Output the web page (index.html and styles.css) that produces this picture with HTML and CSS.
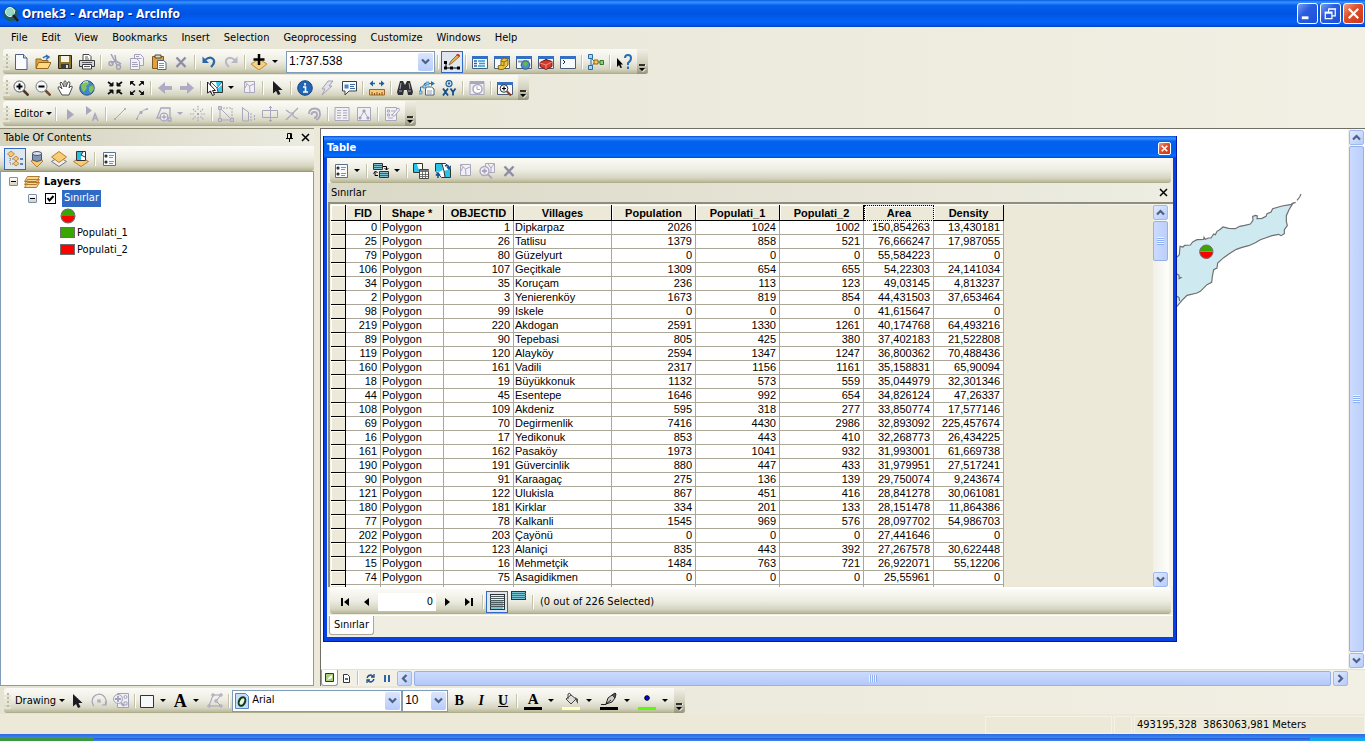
FILE: index.html
```html
<!DOCTYPE html>
<html lang="en">
<head>
<meta charset="utf-8">
<title>Ornek3 - ArcMap - ArcInfo</title>
<link rel="stylesheet" href="styles.css">
</head>
<body>
<svg class="defs" aria-hidden="true">
  <symbol id="chev-down" viewBox="0 0 9 9"><path d="M1 2.500l3.500 3.500 3.500-3.500" fill="none" stroke="#4d6185" stroke-width="2.200"/></symbol>
  <symbol id="chev-up" viewBox="0 0 9 9"><path d="M1 6.500l3.500-3.500 3.500 3.500" fill="none" stroke="#4d6185" stroke-width="2.200"/></symbol>
  <symbol id="chev-left" viewBox="0 0 9 9"><path d="M6.500 1l-3.500 3.500 3.500 3.500" fill="none" stroke="#4d6185" stroke-width="2.200"/></symbol>
  <symbol id="chev-right" viewBox="0 0 9 9"><path d="M2.500 1l3.500 3.500-3.500 3.500" fill="none" stroke="#4d6185" stroke-width="2.200"/></symbol>
  <symbol id="cross" viewBox="0 0 9 9"><path d="M1 1l7 7M8 1l-7 7" fill="none" stroke="currentColor" stroke-width="1.500"/></symbol>
  <symbol id="more" viewBox="0 0 7 8"><path d="M0 1h6" stroke="#000" stroke-width="1.500"/><path d="M0 4h6l-3 3z"/><path d="M6 1.500h1M6.500 5l-3 3" stroke="#fff"/></symbol>
  <symbol id="delete" viewBox="0 0 16 16"><path d="M3.500 3.500l9 9.500M12.500 3.500l-9 9.500" stroke="#8f8ca6" stroke-width="2.400" fill="none"/></symbol>
  <symbol id="clearsel" viewBox="0 0 16 16"><path d="M3.500 1.500h10v11h-10z" fill="#f1f0f5" stroke="#aaa7bd"/><path d="M4 2l4.500 4L13 4M8.500 6L9 12M6 4l-2 4" fill="none" stroke="#aaa7bd"/></symbol>
  <symbol id="options" viewBox="0 0 16 16"><path d="M2.500 1.500h12v13h-12z" fill="#f8fafc" stroke="#5b7089"/><circle cx="5" cy="5" r="1.500"/><circle cx="5" cy="11" r="1.500"/><circle cx="5" cy="5" r=".5" fill="#fff"/><circle cx="5" cy="11" r=".5" fill="#fff"/><path d="M8 4.500h5M8 6.500h4M8 10.500h5M8 12.500h4" stroke="#6f87a5" stroke-width=".9"/></symbol>
  <symbol id="pointer" viewBox="0 0 16 16"><path d="M4 1v12.500l3-2.500 2 4 2.500-1-2-4h4z" fill="#1c1c20"/></symbol>
  <symbol id="window" viewBox="0 0 16 16"><path d="M.500 2.500h15v12H.500z" fill="#f6f8fb" stroke="#4b5c75"/><path d="M0 2h16v3H0z" fill="#3470c4"/></symbol>
  <symbol id="pie" viewBox="0 0 16 16"><path d="M1 8a7 7 0 0 1 14 0z" fill="#38a800"/><path d="M1 8a7 7 0 0 0 14 0z" fill="#f00"/><circle cx="8" cy="8" r="7" fill="none" stroke="#6e6e6e" stroke-width="1.100"/></symbol>
</svg>

<header class="titlebar">
  <svg class="icon" viewBox="0 0 16 16"><circle cx="8" cy="8" r="7.500" fill="#1c5b68"/><path d="M4 2q6-2 9 3l-3 1-1 4-4-1-3-3z" fill="#5fc06b"/><circle cx="7" cy="6" r="4.500" fill="#a8e6ec" fill-opacity=".7" stroke="#e9f7f7"/><path d="M10 9l5 6" stroke="#2d1b12" stroke-width="2.500"/></svg>
  <h1>Ornek3 - ArcMap - ArcInfo</h1>
  <button class="winbtn" aria-label="Minimize"><svg viewBox="0 0 20 20"><path d="M4 13h7v3H4z" fill="#fff"/></svg></button>
  <button class="winbtn" aria-label="Restore"><svg viewBox="0 0 20 20" fill="none" stroke="#fff"><path d="M4.500 8.500h7v7h-7zM4 9.500h8M8 8V5.500h7v7h-3M8 5h8" stroke-width="1.300"/></svg></button>
  <button class="winbtn close" aria-label="Close"><svg viewBox="0 0 20 20"><path d="M5 5l10 10M15 5L5 15" stroke="#fff" stroke-width="2.300"/></svg></button>
</header>

<nav class="menubar">
  <button>File</button><button>Edit</button><button>View</button><button>Bookmarks</button><button>Insert</button><button>Selection</button><button>Geoprocessing</button><button>Customize</button><button>Windows</button><button>Help</button>
</nav>

<div class="docks">
  <div class="toolbar" role="toolbar" aria-label="Standard">
    <i class="grip"></i>
    <button class="tool" aria-label="New"><svg viewBox="0 0 16 16"><path d="M2.500.5h8l3.500 3.500v11.500H2.500z" fill="#f9fbfe" stroke="#46638c"/><path d="M10.500.5v3.500H14" fill="#c9d8ec" stroke="#46638c"/></svg></button>
    <button class="tool" aria-label="Open"><svg viewBox="0 0 16 16"><path d="M1 5h5l1 1.500h6V14H1z" fill="#dfa73e" stroke="#93661b"/><path d="M3.500 8.500H16L13 14.500H1z" fill="#ffd980" stroke="#93661b"/><path d="M8 4q2-2.500 5-1M11 1l3 2-3 2.500" fill="none" stroke="#2d6fb4" stroke-width="1.500"/></svg></button>
    <button class="tool" aria-label="Save"><svg viewBox="0 0 16 16"><path d="M1.500 1.500h13v13H1.500z" fill="#8e7629" stroke="#2d2612"/><path d="M4 2h8v6H4z" fill="#f6f3e6"/><path d="M4 10h8v5H4z" fill="#3a3a3a"/><path d="M9 11h2v3H9z" fill="#ddd"/></svg></button>
    <button class="tool" aria-label="Print"><svg viewBox="0 0 16 16"><path d="M4 .500h6l2 2V7H4z" fill="#fff" stroke="#444"/><path d="M.500 6.500h15v6H.500z" fill="#d5d7da" stroke="#3d3d40"/><path d="M3.500 10.500h9v4.500h-9z" fill="#fff" stroke="#3d3d40"/><path d="M5 12.500h6M3 8.500h10M6 3h3M6 5h4" stroke="#5d5d60"/></svg></button>
    <i class="sep"></i>
    <button class="tool" aria-label="Cut"><svg viewBox="0 0 16 16" fill="none" stroke="#a3a1b8" stroke-width="1.500"><path d="M4 0l6 11M8 1l1 6-5 2"/><circle cx="4" cy="9.500" r="2"/><ellipse cx="11.500" cy="13" rx="2" ry="2.300"/><path d="M9 7l5 3"/></svg></button>
    <button class="tool" aria-label="Copy"><svg viewBox="0 0 16 16" fill="#f2f1f6" stroke="#a3a1b8"><path d="M5.500.5h6l3 3v8h-9z"/><path d="M1.500 4.500h6l3 3v8h-9zM3 8.500h5M3 10.500h6M3 12.500h6M7.500 4.500h5M7 2.500h3"/></svg></button>
    <button class="tool" aria-label="Paste"><svg viewBox="0 0 16 16"><path d="M1.500 2.500h11v12h-11z" fill="#e0a23f" stroke="#825a1a"/><path d="M4 1h6v3H4z" fill="#ded9cc" stroke="#50493c"/><path d="M6.500 6.500h6l2.500 2v7H6.500z" fill="#fff" stroke="#4e6484"/><path d="M8 9.500h5M8 11.500h5M8 13.500h5" stroke="#7a93b5"/></svg></button>
    <button class="tool" aria-label="Delete"><svg><use href="#delete"/></svg></button>
    <i class="sep"></i>
    <button class="tool" aria-label="Undo"><svg viewBox="0 0 16 16"><path d="M4 6q5-4 8-1t-2 8" fill="none" stroke="#2c66a8" stroke-width="2.200"/><path d="M1.500 2.500V9H8z" fill="#2c66a8"/></svg></button>
    <button class="tool" aria-label="Redo"><svg viewBox="0 0 16 16"><path d="M12 6q-5-4-8-1t2 8" fill="none" stroke="#b9b7c6" stroke-width="2"/><path d="M14.500 2.500V9H8z" fill="#b9b7c6"/></svg></button>
    <i class="sep"></i>
    <button class="tool wide" aria-label="Add Data"><svg viewBox="0 0 16 16"><path d="M8 5l8 5-8 6-8-6z" fill="#f7d182" stroke="#c08a34"/><path d="M8 0v11M2.500 5.500h11" stroke="#000" stroke-width="2.500"/></svg><i class="drop"></i></button>
    <label class="combo scale"><select aria-label="Map scale"><option>1:737.538</option></select><span class="combobtn"><svg><use href="#chev-down"/></svg></span></label>
    <i class="sep"></i>
    <button class="tool on" aria-label="Editor Toolbar"><svg viewBox="0 0 16 16"><path d="M2 8.500V14h12" fill="none" stroke="#000"/><path d="M0 7h3v3H0zM0 12.500h3v3H0zM6 12.500h3v3H6zM13 12.500h3v3h-3z"/><path d="M5 11l2-4L14 0l2 2-8 7z" fill="#e8b44a" stroke="#7d5521" stroke-width=".8"/><path d="M13 0l2 2" stroke="#c3333a" stroke-width="2"/></svg></button>
    <i class="sep"></i>
    <button class="tool" aria-label="Table Of Contents"><svg viewBox="0 0 16 16"><use href="#window"/><path d="M2 7h3M2 9.500h3M2 12h3" stroke="#2d64b0" stroke-width="1.500"/><path d="M6 7h7M7 9.500h6M6 12h7" stroke="#2f9bd8" stroke-width="1.300"/></svg></button>
    <button class="tool" aria-label="Catalog"><svg viewBox="0 0 16 16"><use href="#window"/><path d="M4 12l3-1V6l3-2 4 1v6l-4 4-5 1z" fill="#ecc53f" stroke="#7d6414"/><path d="M7 7l3 1 4-2M10 8v4M7 11l3 1" stroke="#8a6d12" fill="none"/></svg></button>
    <button class="tool" aria-label="Search"><svg viewBox="0 0 16 16"><use href="#window"/><path d="M2 7.500h11" stroke="#8b9ab0" stroke-width="2"/><circle cx="9.500" cy="11" r="4.300" fill="#4d8cc9" stroke="#2c5a85"/><path d="M7 9q3-3 5 0l-2 4-2-2z" fill="#62b854"/></svg></button>
    <button class="tool" aria-label="ArcToolbox"><svg viewBox="0 0 16 16"><use href="#window"/><path d="M2 8.500l6-3 6 2v5l-6 3-6-3z" fill="#d63a2c" stroke="#7d1b14"/><path d="M2 9l6 2 6-3M8 11v4" stroke="#f08a7d" fill="none"/><path d="M6 7q2-3 4 0" stroke="#7d1b14" fill="none"/></svg></button>
    <button class="tool" aria-label="Python"><svg viewBox="0 0 16 16"><use href="#window"/><path d="M3 6l2 2-2 2" fill="none" stroke="#222"/></svg></button>
    <i class="sep"></i>
    <button class="tool" aria-label="ModelBuilder"><svg viewBox="0 0 16 16"><path d="M3 4v9M3 4l4 4-4 5M7 8h8" fill="none" stroke="#2b6aa5"/><path d="M.500.500h4v4h-4zM.500 11.500h4v4h-4z" fill="#a6d7f4" stroke="#2b6aa5"/><path d="M6 6h4v4H6z" fill="#f4cf54" stroke="#8a691a"/><path d="M12 6.500h3.500v4H12z" fill="#8bd27c" stroke="#35762d"/></svg></button>
    <i class="sep"></i>
    <button class="tool" aria-label="What's This?"><svg viewBox="0 0 16 16"><path d="M1 4v9l2-2 1.500 3 1.500-.5-1.500-3H7z"/><path d="M9 4q0-3 3-3t3 3-3 5v2M12 12.500V15" stroke="#2a6db5" stroke-width="2" fill="none"/></svg></button>
    <button class="more" aria-label="Toolbar options"><svg><use href="#more"/></svg></button>
  </div>

  <div class="toolbar" role="toolbar" aria-label="Tools">
    <i class="grip"></i>
    <button class="tool" aria-label="Zoom In"><svg viewBox="0 0 16 16"><circle cx="6.500" cy="6.500" r="5.500" fill="#f5f8fb" stroke="#555"/><path d="M3.500 6.500h6M6.500 3.500v6" stroke="#000" stroke-width="2"/><path d="M10.500 10.500l5 5" stroke="#4a3524" stroke-width="2.500"/></svg></button>
    <button class="tool" aria-label="Zoom Out"><svg viewBox="0 0 16 16"><circle cx="6.500" cy="6.500" r="5.500" fill="#f5f8fb" stroke="#777"/><path d="M3.500 6.500h6" stroke="#000" stroke-width="2"/><path d="M10.500 10.500l5 5" stroke="#6b4a31" stroke-width="2.500"/></svg></button>
    <button class="tool" aria-label="Pan"><svg viewBox="0 0 16 16"><path d="M5 15L1 8q0-2 2-1l2 2-2-6q1-2 2 0l2 4V1.500q1-1.500 2 0V7l2-5q1.500-1 2 1l-1 5 2-2q2 0 1 2l-3 7z" fill="#fff" stroke="#4c4c4c"/></svg></button>
    <button class="tool" aria-label="Full Extent"><svg viewBox="0 0 16 16"><circle cx="8" cy="8" r="7.200" fill="#3f87cf" stroke="#234f80"/><path d="M2 5q3-4 7-4l1 3-3 2 1 2-3 4q-3-2-3-7zM10 7l4-2 1 4-3 4-2-2z" fill="#83c257"/><path d="M4 3q2-2 5-1" stroke="#e3f4cf" fill="none"/></svg></button>
    <i class="sep blank"></i>
    <button class="tool" aria-label="Fixed Zoom In"><svg viewBox="0 0 16 16" fill="#111" stroke="#111"><path d="M1 2l4 3M15 2l-4 3M1 14l4-3M15 14l-4-3" stroke-width="1.800"/><path d="M6 2.500V6H2.500zM10 2.500V6h3.500zM6 13.500V10H2.500zM10 13.500V10h3.500z"/></svg></button>
    <button class="tool" aria-label="Fixed Zoom Out"><svg viewBox="0 0 16 16" fill="#111" stroke="#111"><path d="M2 2l4 3.500M14 2l-4 3.500M2 14l4-3.500M14 14l-4-3.500" stroke-width="1.600"/><path d="M1.500 1.500h3l-3 3zM14.500 1.500h-3l3 3zM1.500 14.500h3l-3-3zM14.500 14.500h-3l3-3z"/></svg></button>
    <i class="sep"></i>
    <button class="tool" aria-label="Back"><svg viewBox="0 0 16 16"><path d="M1 8l7-6v4h7v4H8v4z" fill="#aeabc2"/></svg></button>
    <button class="tool" aria-label="Forward"><svg viewBox="0 0 16 16"><path d="M15 8L8 2v4H1v4h7v4z" fill="#aeabc2"/></svg></button>
    <i class="sep"></i>
    <button class="tool wide" aria-label="Select Features"><svg viewBox="0 0 16 16"><path d="M3.500 1.500h12v11h-12z" fill="#fff" stroke="#333"/><path d="M9 2h6l-5 5zM10 9l5-4v7h-4z" fill="#35c9ec"/><path d="M4 2l6 6 5-6M10 8l1 4" fill="none" stroke="#333" stroke-width=".8"/><path d="M.5 2v11l3-2 2 4.500 2-1-2-4h3z" fill="#fff" stroke="#222"/></svg><i class="drop"></i></button>
    <button class="tool" aria-label="Clear Selected Features"><svg><use href="#clearsel"/></svg></button>
    <i class="sep"></i>
    <button class="tool" aria-label="Select Elements"><svg><use href="#pointer"/></svg></button>
    <i class="sep"></i>
    <button class="tool" aria-label="Identify"><svg viewBox="0 0 16 16"><circle cx="8" cy="8" r="7.300" fill="#2366b8" stroke="#174480"/><path d="M8 3v2.500M6 7h2.500v5M6 12h5" stroke="#fff" stroke-width="1.600" fill="none"/></svg></button>
    <button class="tool" aria-label="Hyperlink"><svg viewBox="0 0 16 16"><path d="M9 1h5l-4 5h3L3 15l3-6H3z" fill="#e3e2ea" stroke="#a3a1b8"/></svg></button>
    <button class="tool" aria-label="HTML Popup"><svg viewBox="0 0 16 16"><path d="M1.500 1.500h14v9.500H8l-4 4v-4H1.500z" fill="#f8fafc" stroke="#3e4247"/><path d="M3.500 4.500h4v4h-4z" fill="#4c86c4"/><path d="M9 4.500h5M9 6.500h4M9 8.500h5" stroke="#3a6da8"/></svg></button>
    <i class="sep"></i>
    <button class="tool" aria-label="Measure"><svg viewBox="0 0 16 16"><path d="M2 3.500h4M10 3.500h4" stroke="#256ba8" stroke-width="1.500"/><path d="M4 .500v6L.500 3.500zM12 .500v6l3.500-3z" fill="#1f5d9c"/><path d="M.500 9.500h15v5.500H.500z" fill="#f4ca7c" stroke="#a46428"/><path d="M3 15v-3M5.500 15v-2M8 15v-3M10.500 15v-2M13 15v-3" stroke="#8a4f1b"/></svg></button>
    <i class="sep"></i>
    <button class="tool" aria-label="Find"><svg viewBox="0 0 16 16"><path d="M3 1h3l2 4 2-4h3l3 11-1 3h-4l-1-5H7l-1 5H1l-1-3z" fill="#2f3034"/><path d="M2 11h3M11 11h3M4 3l-1 6M12 3l1 6" stroke="#a3a7ae"/></svg></button>
    <button class="tool" aria-label="Find Route"><svg viewBox="0 0 16 16"><path d="M1.500 12V7h4V3.500h7" fill="none" stroke="#2874a8"/><path d="M12 1l4 2.500L12 6z" fill="#2874a8"/><path d="M0 11h3v3H0zM4 5h3v3H4zM7 2h3v3H7z" fill="#9fd0ee" stroke="#2874a8" stroke-width=".6"/><path d="M6.500 8.500l2-1.500h4l2.500 2v6H6.500z" fill="#fff" stroke="#4b6378"/><path d="M8 11h5M8 13h5" stroke="#8ba0b1"/></svg></button>
    <button class="tool" aria-label="Go To XY"><svg viewBox="0 0 16 16"><circle cx="8" cy="3.500" r="3" fill="#dff1fb" stroke="#2b6795" stroke-width="1.300"/><circle cx="8" cy="3.500" r="1.200" fill="#2b6795"/><path d="M2 8.500l5 7M7 8.500l-5 7M9.500 8.500l2.500 3.500 2.500-3.500M12 12v3.500" stroke="#174f87" stroke-width="1.800" fill="none"/></svg></button>
    <i class="sep"></i>
    <button class="tool" aria-label="Time Slider"><svg viewBox="0 0 16 16"><path d="M1 1.500h14v13H1z" fill="#eeedf3" stroke="#aaa7bd"/><path d="M1 2h14v2H1z" fill="#aaa7bd"/><circle cx="8.500" cy="9" r="4.500" fill="#fff" stroke="#aaa7bd" stroke-width="1.500"/><path d="M8 6v3.500h3" stroke="#aaa7bd" fill="none"/></svg></button>
    <i class="sep"></i>
    <button class="tool" aria-label="Create Viewer Window"><svg viewBox="0 0 16 16"><use href="#window"/><circle cx="7" cy="8.500" r="3.800" fill="#fff" stroke="#333"/><path d="M5 8.500h4M7 6.500v4" stroke="#000" stroke-width="1.200"/><path d="M10 11.500l4 4" stroke="#8a3b24" stroke-width="2"/></svg></button>
    <button class="more" aria-label="Toolbar options"><svg><use href="#more"/></svg></button>
  </div>

  <div class="toolbar" role="toolbar" aria-label="Editor">
    <i class="grip"></i>
    <button class="textbtn">Editor<i class="drop"></i></button>
    <i class="sep"></i>
    <button class="tool" aria-label="Edit Tool"><svg viewBox="0 0 16 16"><path d="M5 3v11l7-5.500z" fill="#aaa7bd"/></svg></button>
    <button class="tool" aria-label="Edit Annotation"><svg viewBox="0 0 16 16"><path d="M2 0v9l6-4.500z" fill="#aaa7bd"/><path d="M8.500 15L11 8l3 7M9.500 12.500h4" stroke="#aaa7bd" stroke-width="1.600" fill="none"/></svg></button>
    <i class="sep"></i>
    <button class="tool" aria-label="Straight Segment"><svg viewBox="0 0 16 16" fill="#aaa7bd" stroke="#aaa7bd"><path d="M3 13L13 3M2.500 12.500h1v1h-1zM12.500 2.500h1v1h-1z"/></svg></button>
    <button class="tool" aria-label="End Point Arc"><svg viewBox="0 0 16 16" fill="#aaa7bd" stroke="#aaa7bd"><path d="M3 13Q5 5 13 3" fill="none"/><path d="M2.500 12.500h1v1h-1zM12.500 2.500h1v1h-1zM6 5.500h2v2H6z"/></svg></button>
    <button class="tool wide" aria-label="Trace"><svg viewBox="0 0 16 16" fill="none" stroke="#aaa7bd" stroke-width="1.300"><path d="M4 12H1L5 2h9v9"/><circle cx="8" cy="11" r="3.800" fill="#f1f0f5"/><path d="M8 8.500v5M5.500 11h5M12 12h3v3h-3z"/></svg><i class="drop off"></i></button>
    <button class="tool" aria-label="Point"><svg viewBox="0 0 16 16" stroke="#aaa7bd" stroke-width="1.200" stroke-dasharray="1.500 1"><path d="M8 0v5M8 11v5M0 8h5M11 8h5M3 3l3 3M10.500 10.500l3 3M13 3l-3 3M5.500 10.500l-3 3"/><path d="M7 7h2v2H7z" fill="#aaa7bd" stroke="none"/></svg></button>
    <i class="sep"></i>
    <button class="tool" aria-label="Edit Vertices"><svg viewBox="0 0 16 16" fill="none" stroke="#aaa7bd"><path d="M2 2h12v12" stroke-dasharray="2 1"/><path d="M2 3v11h12L2 2"/><path d="M.500.500h3v3h-3zM12.500 12.500h3v3h-3zM.500 12.500h3v3h-3z" fill="#cfcddb"/></svg></button>
    <button class="tool" aria-label="Reshape Feature"><svg viewBox="0 0 16 16" fill="none" stroke="#aaa7bd"><path d="M2.500 1v14M2.500 2l6 4v9H3"/><path d="M11 7v8M14.500 9v6" stroke-dasharray="2 1"/></svg></button>
    <button class="tool" aria-label="Cut Polygons"><svg viewBox="0 0 16 16" fill="none" stroke="#aaa7bd"><path d="M.500 4.500h15v7H.500z"/><path d="M8.500 0v16M7 1.500h3M7 14.500h3"/></svg></button>
    <button class="tool" aria-label="Split Tool"><svg viewBox="0 0 16 16" fill="none" stroke="#aaa7bd" stroke-width="1.200"><path d="M2 14L14 2M2 4l4 3M9 10l5 3"/><path d="M6 7h3v3"/></svg></button>
    <button class="tool" aria-label="Rotate Tool"><svg viewBox="0 0 16 16" fill="none" stroke="#aaa7bd" stroke-width="1.800"><path d="M3 8q0-5.500 5.500-5.500T14 8q0 4.500-4 6"/><path d="M5.500 9q0-3 3-3t2.500 3-3 3"/></svg></button>
    <i class="sep"></i>
    <button class="tool" aria-label="Attributes"><svg viewBox="0 0 16 16" fill="#f1f0f5" stroke="#aaa7bd"><path d="M1 1.500h14v13H1zM3 4.500h4M9 4.500h4M3 7h4M9 7h4M3 9.500h4M9 9.500h4M3 12h4M9 12h4"/></svg></button>
    <button class="tool" aria-label="Sketch Properties"><svg viewBox="0 0 16 16" fill="#f1f0f5" stroke="#aaa7bd"><path d="M1.500 1.500h13v13h-13zM4 12l4-7 4 7"/><path d="M3 11h2v2H3zM11 11h2v2h-2zM7 4h2v2H7z" fill="#8f8ca6"/></svg></button>
    <i class="sep"></i>
    <button class="tool" aria-label="Create Features"><svg viewBox="0 0 16 16" fill="#f1f0f5" stroke="#aaa7bd"><path d="M1.500 1.500h11v13h-11zM3.500 4h2v2h-2zM3.500 8h2v2h-2zM7 5h4M7 9h4M4 12h5"/><path d="M8 9l6-7 2 1.500-6 7z"/></svg></button>
    <button class="more" aria-label="Toolbar options"><svg><use href="#more"/></svg></button>
  </div>
</div>

<main class="workspace">
  <aside class="toc">
    <div class="panelhead"><h2>Table Of Contents</h2>
      <button aria-label="Auto Hide"><svg viewBox="0 0 9 9" fill="none" stroke="#000"><path d="M2.500 5V.500h4V5M5.500 0v5M1 5.500h7M4.500 6v3"/></svg></button>
      <button aria-label="Close"><svg><use href="#cross"/></svg></button></div>
    <div class="bar tocbar" role="toolbar" aria-label="List layers">
      <button class="tool on" aria-label="List By Drawing Order"><svg viewBox="0 0 16 16"><path d="M3 5v8h4M3 8h4" fill="none" stroke="#777" stroke-dasharray="1 1"/><path d="M4 0l3.500 3L4 6 .500 3zM9 5l3 2.500L9 10 6 7.500zM9 10l3 2.500L9 15l-3-2.500z" fill="#f3c87d" stroke="#c18a3e"/><path d="M13 8h3M13 13h3" stroke="#2d64b0" stroke-width="1.500"/></svg></button>
      <button class="tool" aria-label="List By Source"><svg viewBox="0 0 16 16"><path d="M2 10l6-3 6 3-6 6z" fill="#f7ca70" stroke="#b77e31"/><path d="M3.500 2v7q4.500 3 9 0V2z" fill="#8196b4" stroke="#47566b"/><ellipse cx="8" cy="2.500" rx="4.500" ry="2" fill="#d9e2ee" stroke="#47566b"/></svg></button>
      <button class="tool" aria-label="List By Visibility"><svg viewBox="0 0 16 16"><path d="M8 6l7.500 4.500L8 15.500.500 10.500z" fill="#eee" stroke="#777"/><path d="M8 .500L15.500 6 8 11.500.500 6z" fill="#f8cb74" stroke="#b77e31"/></svg></button>
      <button class="tool" aria-label="List By Selection"><svg viewBox="0 0 16 16"><path d="M8 6l7.500 4.500L8 15.500.500 10.500z" fill="#f8cb74" stroke="#b77e31"/><path d="M3.500.500h9v9h-9z" fill="#fff" stroke="#333"/><path d="M4 1h6L8 4v5H4z" fill="#28bfe5"/><path d="M10 1L8 4l4 2" stroke="#333" fill="none"/></svg></button>
      <i class="sep"></i>
      <button class="tool" aria-label="Options"><svg><use href="#options"/></svg></button>
    </div>
    <div class="tree">
      <div class="node"><button class="twist" aria-label="Collapse"></button><svg class="icon" viewBox="0 0 16 16" fill="#f8d694" stroke="#b07a30"><path d="M3.500 8.500h12l-3 5H.500zM3.500 5.500h12l-3 5H.500zM3.500 2.500h12l-3 5H.500z"/></svg><strong>Layers</strong></div>
      <div class="node lvl1"><button class="twist" aria-label="Collapse"></button><input type="checkbox" id="lyr" checked><label for="lyr" class="picked">Sınırlar</label></div>
      <div class="node lvl2"><svg class="icon"><use href="#pie"/></svg></div>
      <div class="node lvl2"><i class="swatch green"></i><span>Populati_1</span></div>
      <div class="node lvl2"><i class="swatch red"></i><span>Populati_2</span></div>
    </div>
  </aside>

  <section class="mapview">
    <div class="canvas">
      <svg class="island" viewBox="530 190 381 345" aria-label="Map">
        <path d="M530 382L537 375 539 350 548 352 553 347 570 346 577 337 590 330 610 329 611 323 615 329 624 325 632 325 640 313 645 315 650 305 658 300 668 292 685 296 705 297 718 290 733 287 750 283 758 272 757 260 765 257 771 259 770 267 785 266 797 260 800 252 812 247 817 237 845 229 870 225 877 222 866 240 858 258 858 275 861 288 852 300 852 312 842 318 835 314 815 318 795 325 780 330 765 339 745 348 725 353 708 359 690 370 670 384 652 400 650 415 640 420 636 440 634 458 620 465 600 485 590 490 560 497 545 512 540 518 530 530" fill="#cfe9f0" stroke="#6e6e6e" stroke-width="3.500"/>
        <path d="M874 222l12-4M890 212l8-10 4-9M530 433l6 3 0 6 6 2-8 4M530 500l6 4 2 10" fill="none" stroke="#6e6e6e" stroke-width="3.500"/>
        <path d="M598 366a20 20 0 0 1 40 0z" fill="#38a800"/><path d="M598 367a20 20 0 0 0 40 0z" fill="#f00"/><circle cx="618" cy="366" r="20" fill="none" stroke="#6e6e6e" stroke-width="3"/>
      </svg>

      <section class="window" aria-label="Table">
        <div class="wtitle"><h2>Table</h2><button class="winbtn close" aria-label="Close"><svg viewBox="0 0 20 20"><path d="M5 5l10 10M15 5L5 15" stroke="#fff" stroke-width="3"/></svg></button></div>
        <div class="wbody">
          <div class="bar" role="toolbar" aria-label="Table tools">
            <button class="tool wide" aria-label="Table Options"><svg><use href="#options"/></svg><i class="drop"></i></button>
            <i class="sep"></i>
            <button class="tool wide" aria-label="Related Tables"><svg viewBox="0 0 16 16"><path d="M.500.500h9v6h-9zM6.500 8.500h9v6h-9z" fill="#7fbfd0" stroke="#333"/><path d="M1 2.500h8M1 4.500h8M7 10.500h8M7 12.500h8" stroke="#333" stroke-width=".7"/><path d="M10 3.500h3.500V7M11.500 5l2 2 2-2M5 12.500H2V9M.500 10.500L2.500 8l2 2" fill="none" stroke="#000"/></svg><i class="drop"></i></button>
            <i class="sep"></i>
            <button class="tool" aria-label="Select By Attributes"><svg viewBox="0 0 16 16"><path d="M.500.500h9v9h-9z" fill="#fff" stroke="#333"/><path d="M1 1h3l1 4 4 4H1z" fill="#28c4e8"/><path d="M6.500 6.500h9v9h-9z" fill="#fff" stroke="#444"/><path d="M7 7h9v2H7z" fill="#777"/><path d="M7 11.500h8M7 13.500h8M9.500 8v7M12.500 8v7" stroke="#555" stroke-width=".8"/></svg></button>
            <button class="tool" aria-label="Switch Selection"><svg viewBox="0 0 16 16"><path d="M.500.500h10l5 5v9h-9L.500 8z" fill="#fff" stroke="#333"/><path d="M1 1h6l1 6-4 2-3-1zM9 8l6-2v8h-5z" fill="#28c4e8"/><path d="M7 1l2 7 1 6" stroke="#333" fill="none"/><path d="M10 3q3-2 4 2M12 4l2 2 2-3M3 15v-4M1 12.500L3 10l2 2.500" stroke="#14569b" stroke-width="1.600" fill="none"/></svg></button>
            <button class="tool" aria-label="Clear Selection"><svg><use href="#clearsel"/></svg></button>
            <button class="tool" aria-label="Zoom To Selected"><svg viewBox="0 0 16 16" stroke="#aaa7bd" fill="#f1f0f5"><path d="M6.500.500h9v9h-9zM9 1l3 4 3-4M12 5v4"/><circle cx="5.500" cy="8" r="4.500" stroke-width="1.400"/><path d="M3 8h5M5.500 5.500v5M9 11.500l4 4" stroke-width="1.800"/></svg></button>
            <button class="tool" aria-label="Delete Selected"><svg><use href="#delete"/></svg></button>
          </div>
          <div class="caption"><span>Sınırlar</span><button aria-label="Close table"><svg><use href="#cross"/></svg></button></div>
          <div class="gridwrap">
            <div class="grid">
              <table>
                <colgroup><col class="c0"><col class="c1"><col class="c2"><col class="c3"><col class="c4"><col class="c5"><col class="c5"><col class="c5"><col class="c3"><col class="c3"></colgroup>
                <thead><tr><th></th><th>FID</th><th>Shape *</th><th>OBJECTID</th><th>Villages</th><th>Population</th><th>Populati_1</th><th>Populati_2</th><th class="focus">Area</th><th>Density</th></tr></thead>
                <tbody>
<tr><th></th><td>0<td>Polygon<td>1<td>Dipkarpaz<td>2026<td>1024<td>1002<td>150,854263<td>13,430181</tr>
<tr><th></th><td>25<td>Polygon<td>26<td>Tatlisu<td>1379<td>858<td>521<td>76,666247<td>17,987055</tr>
<tr><th></th><td>79<td>Polygon<td>80<td>Güzelyurt<td>0<td>0<td>0<td>55,584223<td>0</tr>
<tr><th></th><td>106<td>Polygon<td>107<td>Geçitkale<td>1309<td>654<td>655<td>54,22303<td>24,141034</tr>
<tr><th></th><td>34<td>Polygon<td>35<td>Koruçam<td>236<td>113<td>123<td>49,03145<td>4,813237</tr>
<tr><th></th><td>2<td>Polygon<td>3<td>Yenierenköy<td>1673<td>819<td>854<td>44,431503<td>37,653464</tr>
<tr><th></th><td>98<td>Polygon<td>99<td>Iskele<td>0<td>0<td>0<td>41,615647<td>0</tr>
<tr><th></th><td>219<td>Polygon<td>220<td>Akdogan<td>2591<td>1330<td>1261<td>40,174768<td>64,493216</tr>
<tr><th></th><td>89<td>Polygon<td>90<td>Tepebasi<td>805<td>425<td>380<td>37,402183<td>21,522808</tr>
<tr><th></th><td>119<td>Polygon<td>120<td>Alayköy<td>2594<td>1347<td>1247<td>36,800362<td>70,488436</tr>
<tr><th></th><td>160<td>Polygon<td>161<td>Vadili<td>2317<td>1156<td>1161<td>35,158831<td>65,90094</tr>
<tr><th></th><td>18<td>Polygon<td>19<td>Büyükkonuk<td>1132<td>573<td>559<td>35,044979<td>32,301346</tr>
<tr><th></th><td>44<td>Polygon<td>45<td>Esentepe<td>1646<td>992<td>654<td>34,826124<td>47,26337</tr>
<tr><th></th><td>108<td>Polygon<td>109<td>Akdeniz<td>595<td>318<td>277<td>33,850774<td>17,577146</tr>
<tr><th></th><td>69<td>Polygon<td>70<td>Degirmenlik<td>7416<td>4430<td>2986<td>32,893092<td>225,457674</tr>
<tr><th></th><td>16<td>Polygon<td>17<td>Yedikonuk<td>853<td>443<td>410<td>32,268773<td>26,434225</tr>
<tr><th></th><td>161<td>Polygon<td>162<td>Pasaköy<td>1973<td>1041<td>932<td>31,993001<td>61,669738</tr>
<tr><th></th><td>190<td>Polygon<td>191<td>Güvercinlik<td>880<td>447<td>433<td>31,979951<td>27,517241</tr>
<tr><th></th><td>90<td>Polygon<td>91<td>Karaagaç<td>275<td>136<td>139<td>29,750074<td>9,243674</tr>
<tr><th></th><td>121<td>Polygon<td>122<td>Ulukisla<td>867<td>451<td>416<td>28,841278<td>30,061081</tr>
<tr><th></th><td>180<td>Polygon<td>181<td>Kirklar<td>334<td>201<td>133<td>28,151478<td>11,864386</tr>
<tr><th></th><td>77<td>Polygon<td>78<td>Kalkanli<td>1545<td>969<td>576<td>28,097702<td>54,986703</tr>
<tr><th></th><td>202<td>Polygon<td>203<td>Çayönü<td>0<td>0<td>0<td>27,441646<td>0</tr>
<tr><th></th><td>122<td>Polygon<td>123<td>Alaniçi<td>835<td>443<td>392<td>27,267578<td>30,622448</tr>
<tr><th></th><td>15<td>Polygon<td>16<td>Mehmetçik<td>1484<td>763<td>721<td>26,922071<td>55,12206</tr>
<tr><th></th><td>74<td>Polygon<td>75<td>Asagidikmen<td>0<td>0<td>0<td>25,55961<td>0</tr>
<tr><th></th><td><td><td><td><td><td><td><td><td></tr>
                </tbody>
              </table>
            </div>
            <div class="vscroll"><button aria-label="Scroll up"><svg><use href="#chev-up"/></svg></button><i class="thumb short"><i class="ridge"></i></i><button aria-label="Scroll down"><svg><use href="#chev-down"/></svg></button></div>
          </div>
          <div class="bar records">
            <button class="tool" aria-label="First record"><svg viewBox="0 0 16 16"><path d="M4 4h2v8H4zM12 4v8L7 8z"/></svg></button>
            <button class="tool" aria-label="Previous record"><svg viewBox="0 0 16 16"><path d="M10 4v8L5 8z"/></svg></button>
            <input type="text" value="0" aria-label="Record number">
            <button class="tool" aria-label="Next record"><svg viewBox="0 0 16 16"><path d="M6 4v8l5-4z"/></svg></button>
            <button class="tool" aria-label="Last record"><svg viewBox="0 0 16 16"><path d="M4 4v8l5-4zM10 4h2v8h-2z"/></svg></button>
            <i class="sep"></i>
            <button class="tool on" aria-label="Show all records"><svg viewBox="0 0 16 16" shape-rendering="crispEdges"><path d="M1 .500h14v15H1z" fill="#e4f3f5" stroke="#333"/><path d="M2 6h12v9H2z" fill="#79c3d2"/><path d="M1 2.500h14M1 4.500h14M1 6.500h14M1 8.500h14M1 10.500h14M1 12.500h14" stroke="#4d5c60"/></svg></button>
            <button class="tool top" aria-label="Show selected records"><svg viewBox="0 0 16 16" shape-rendering="crispEdges"><path d="M.500.500h14v8h-14z" fill="#79c3d2" stroke="#333"/><path d="M1 2.500h14M1 4.500h14M1 6.500h14" stroke="#4d7078"/></svg></button>
            <i class="sep"></i>
            <span>(0 out of 226 Selected)</span>
          </div>
          <div class="tabs"><button>Sınırlar</button></div>
        </div>
      </section>
    </div>
    <div class="vscroll main"><button aria-label="Scroll up"><svg><use href="#chev-up"/></svg></button><i class="thumb"><i class="ridge"></i></i><button aria-label="Scroll down"><svg><use href="#chev-down"/></svg></button></div>
    <div class="viewbar">
      <button class="on" aria-label="Data View"><svg viewBox="0 0 9 9"><path d="M.500.500h8v8h-8z" fill="#a9cf7a" stroke="#333"/><path d="M2 7l2-3 3-2v3z" fill="#fff"/></svg></button>
      <button aria-label="Layout View"><svg viewBox="0 0 9 9"><path d="M1.500.500h4l2 2v6h-6z" fill="#fff" stroke="#333"/><path d="M3 4h3v2H3z" fill="#3a75b5"/></svg></button>
      <i class="sep"></i>
      <button aria-label="Refresh"><svg viewBox="0 0 9 9" fill="none" stroke="#174f87" stroke-width="1.300"><path d="M1 4q1-3 4-3l2 1M8 5q-1 3-4 3L2 7M8 0v3H5M1 9V6h3"/></svg></button>
      <button aria-label="Pause"><svg viewBox="0 0 9 9"><path d="M1 1h2v7H1zM5 1h2v7H5z" fill="#2a66a9"/></svg></button>
      <div class="hscroll"><button aria-label="Scroll left"><svg><use href="#chev-left"/></svg></button><i class="thumb"><i class="ridge"></i></i><button aria-label="Scroll right"><svg><use href="#chev-right"/></svg></button></div>
    </div>
  </section>
</main>

<div class="docks bottom">
  <div class="toolbar" role="toolbar" aria-label="Draw">
    <i class="grip"></i>
    <button class="textbtn">Drawing<i class="drop"></i></button>
    <button class="tool" aria-label="Select Elements"><svg><use href="#pointer"/></svg></button>
    <button class="tool" aria-label="Rotate"><svg viewBox="0 0 16 16" fill="none" stroke="#a3a1b8" stroke-width="1.200"><path d="M3 13A7 7 0 1 1 14 12"/><path d="M7 7h2v2H7zM11 12h4v-4"/></svg></button>
    <button class="tool" aria-label="Zoom To Selected Elements"><svg viewBox="0 0 16 16" fill="#efeef4" stroke="#a3a1b8"><path d="M4.500.500h11v14h-11z"/><circle cx="5" cy="6" r="4.500"/><path d="M2 6h6M5 3v6M8 10l3 3" stroke-width="1.800"/><circle cx="12.500" cy="4" r="1.500"/><path d="M11 9h3v3h-3z"/></svg></button>
    <i class="sep"></i>
    <button class="tool wide tight" aria-label="Rectangle"><svg viewBox="0 0 16 16"><path d="M1.500 2.500h13v12h-13z" fill="#f7f8fa" stroke="#333"/></svg><i class="drop"></i></button>
    <button class="tool wide tight letter" aria-label="Text"><b>A</b><i class="drop"></i></button>
    <button class="tool" aria-label="Edit Vertices"><svg viewBox="0 0 16 16" fill="none" stroke="#a3a1b8"><path d="M2 13L6 2h8l-5 6 5 5z"/><path d="M1 12h2v2H1zM5 1h2v2H5zM13 1h2v2h-2zM8 7h2v2H8zM13 12h2v2h-2z" fill="#efeef4"/></svg></button>
    <i class="sep"></i>
    <label class="combo font"><svg class="icon" viewBox="0 0 16 16"><path d="M1.500.500h10l3 3v12h-13z" fill="#c7dcf7" stroke="#5b86c4"/><ellipse cx="8" cy="8.500" rx="3" ry="4.500" transform="rotate(25 8 8.500)" fill="#eef6d8" stroke="#0a3d1d" stroke-width="2"/></svg><select aria-label="Font"><option>Arial</option></select><span class="combobtn"><svg><use href="#chev-down"/></svg></span></label>
    <label class="combo size"><select aria-label="Font size"><option>10</option></select><span class="combobtn"><svg><use href="#chev-down"/></svg></span></label>
    <button class="tool style"><b>B</b></button>
    <button class="tool style"><em>I</em></button>
    <button class="tool style"><u>U</u></button>
    <i class="sep"></i>
    <button class="tool color" aria-label="Font Color"><span class="ink"><b>A</b><i class="black"></i></span><i class="drop"></i></button>
    <button class="tool color" aria-label="Fill Color"><span class="ink"><svg viewBox="0 0 16 14"><path d="M3 7l5-4 5 4-5 5z" fill="#ddd" stroke="#444"/><path d="M5 7V2q2-2 3 1" fill="none" stroke="#444"/><path d="M12 5l3 2v5l-2-3z" fill="#555"/></svg><i class="cream"></i></span><i class="drop"></i></button>
    <button class="tool color" aria-label="Line Color"><span class="ink"><svg viewBox="0 0 16 14"><path d="M0 12.500h5" stroke="#222"/><path d="M5 12l2-6 4-3 3 3-3 4z" fill="#ccc" stroke="#222"/><path d="M5 12l5-4M11 3l3-2 1 1-1 4" stroke="#222" fill="#555"/></svg><i class="black"></i></span><i class="drop"></i></button>
    <button class="tool color" aria-label="Marker Color"><span class="ink"><svg viewBox="0 0 16 14"><circle cx="8" cy="6" r="2.300" fill="#00f" stroke="#000"/></svg><i class="lime"></i></span><i class="drop"></i></button>
    <button class="more" aria-label="Toolbar options"><svg><use href="#more"/></svg></button>
  </div>
</div>
<footer class="status"><span class="pane"></span><span class="pane small"></span><output class="pane coords">493195,328&nbsp; 3863063,981 Meters</output></footer>
<div class="taskbar"><i class="start"></i><i class="tray"></i></div>
</body>
</html>
```
FILE: styles.css
```css
* { box-sizing: border-box; }

body {
  margin: 0;
  height: 100vh;
  display: flex;
  flex-direction: column;
  overflow: hidden;
  background: #ece9d8;
  color: #000;
  font: 11px/14px Tahoma, "DejaVu Sans Condensed", "Liberation Sans", sans-serif;
}

h1, h2 { margin: 0; }
button { font: inherit; color: inherit; border: 0; padding: 0; background: none; display: flex; align-items: center; justify-content: center; flex: none; }
svg { display: block; flex: none; }
.defs { position: absolute; width: 0; height: 0; }
.icon { width: 16px; height: 16px; }

/* title bar */
.titlebar {
  height: 27px;
  flex: none;
  display: flex;
  align-items: center;
  gap: 2px;
  padding: 0 1px 0 3px;
  background: linear-gradient(#0a5be4, #3a93ff 8%, #0560ee 20%, #0054e3 50%, #0462f8 80%, #0358ea 92%, #0140c0);
}
.titlebar h1 { flex: 1; font: bold 12px/20px "DejaVu Sans Condensed", sans-serif; color: #fff; text-shadow: 1px 1px #0a1883; padding-left: 1px; }
.winbtn { width: 21px; height: 21px; border: 1px solid #fff; border-radius: 3px; background: linear-gradient(135deg, #7aa0f2, #2a5ee0 40%, #1c4fd8); }
.winbtn svg { width: 19px; height: 19px; }
.winbtn.close { background: linear-gradient(135deg, #f0a086, #e0502b 40%, #c8381a); }

/* menu */
.menubar { height: 22px; flex: none; display: flex; align-items: center; padding-left: 4px; background: linear-gradient(90deg, #e5e4d4, #f2f0e4); }
.menubar button { padding: 0 7px; }

/* toolbars */
.docks { flex: none; display: flex; flex-direction: column; align-items: flex-start; gap: 1px; padding: 0 0 2px 3px; background: linear-gradient(90deg, #e5e4d4, #f2f0e4); }
.docks.bottom { padding: 2px 0 1px 4px; }
.toolbar { display: flex; align-items: center; height: 25px; border-radius: 3px; }
.toolbar, .bar { background: linear-gradient(#fbfaf6, #efeee4 45%, #d6d5c2 80%, #b9b899 96%, #a5a47c); }
.grip { width: 7px; height: 16px; flex: none; background: linear-gradient(#fff0 2px, #e5e4d4 2px) 0 0 / 7px 4px, linear-gradient(90deg, #fff0 3px, #bbb9a2 3px, #bbb9a2 5px, #fff0 5px); }
.tool { width: 22px; height: 22px; }
.tool svg { width: 16px; height: 16px; }
.tool.wide { width: 34px; gap: 5px; justify-content: flex-start; padding-left: 3px; }
.tool.tight { width: 33px; padding-left: 1px; }
.tool.on { border: 1px solid #316ac5; background: #dfe6ee; }
.tool.top { align-items: flex-start; }
.sep { width: 6px; height: 14px; flex: none; background: linear-gradient(90deg, #fff0 2px, #c5c2ac 2px, #c5c2ac 3px, #fff 3px, #fff 4px, #fff0 4px); }
.sep.blank { background: none; }
.drop { width: 0; height: 0; border: 3px solid transparent; border-top-color: #000; border-bottom: 0; flex: none; }
.drop.off { border-top-color: #aaa7bd; }
.textbtn { gap: 3px; padding: 0 1px 0 4px; height: 22px; }
.more { width: 11px; height: 25px; margin-left: 2px; padding-bottom: 2px; align-items: flex-end; border-radius: 0 3px 3px 0; background: linear-gradient(#f1efe6, #cfcdb9 60%, #94937a); }
.more svg { width: 7px; height: 8px; }

.combo { display: flex; align-items: center; height: 22px; background: #fff; border: 1px solid #7f9db9; padding: 1px; flex: none; }
.combo select { appearance: none; flex: 1; min-width: 0; border: 0; outline: 0; background: #fff; font: inherit; color: #000; padding: 0 2px 2px; }
.combobtn { width: 15px; height: 18px; border-radius: 2px; background: linear-gradient(#dbe5fd, #b6ccfb); display: flex; align-items: center; justify-content: center; }
.combobtn svg { width: 9px; height: 9px; }
.combo.scale { width: 149px; margin-left: 4px; }
.combo.scale, .combo.size { font: 12px/14px "Liberation Sans", sans-serif; }
.combo.scale select, .combo.size select { padding-left: 1px; }
.combo.font { width: 170px; }
.combo.size { width: 46px; }

/* workspace */
.workspace { flex: 1; min-height: 0; display: flex; gap: 6px; }
.toc { width: 314px; flex: none; display: flex; flex-direction: column; border-top: 1px solid #8f8c76; }
.panelhead { display: flex; align-items: center; height: 17px; gap: 7px; padding: 0 4px; background: linear-gradient(90deg, #d5d4c1, #ecebe0); }
.panelhead h2 { flex: 1; font-size: 11px; font-weight: normal; line-height: 14px; }
.panelhead svg, .caption svg { width: 9px; height: 9px; }
.bar { display: flex; align-items: center; flex: none; }
.tocbar { height: 25px; padding-left: 4px; border-radius: 0 0 3px 0; }
.tree { flex: 1; background: #fff; border: 1px solid #7f9db9; padding: 1px 8px; }
.node { display: flex; align-items: center; height: 17px; gap: 4px; }
.node .icon { margin-left: 2px; }
.lvl1 { padding-left: 19px; }
.lvl1 .twist { margin-right: 4px; }
.lvl2 { padding-left: 51px; gap: 2px; }
.lvl2 .icon { margin: 0; }
.twist { width: 9px; height: 9px; border: 1px solid #7b8fa9; border-radius: 1px; background: linear-gradient(#000, #000) center / 5px 1px no-repeat, linear-gradient(#fff, #d5d0bd); }
.node input { appearance: none; width: 11px; height: 11px; margin: 0; border: 1px solid #000; background: #fff url("data:image/svg+xml,%3Csvg xmlns='http://www.w3.org/2000/svg' viewBox='0 0 9 9'%3E%3Cpath d='M1.500 4l2 2.500L7.500 2' fill='none' stroke='%23000' stroke-width='2'/%3E%3C/svg%3E"); }
.picked { background: #316ac5; color: #fff; padding: 1px 2px 2px; margin-left: 2px; }
.swatch { width: 15px; height: 11px; border: 1px solid #6e6e6e; }
.green { background: #38a800; }
.red { background: #f00; }

.mapview { flex: 1; min-width: 0; display: grid; grid-template: minmax(0, 1fr) 17px / minmax(0, 1fr) 17px; border-left: 1px solid #716f64; border-top: 1px solid #716f64; background: #fff; }
.canvas { position: relative; overflow: hidden; background: #fff; }
.island { position: absolute; left: 856px; top: 64px; width: 127px; height: 115px; }

/* scroll bars */
.vscroll { display: flex; flex-direction: column; gap: 1px; width: 16px; background: linear-gradient(90deg, #f0efe8, #fefefb); }
.vscroll button, .hscroll button { width: 15px; height: 15px; border: 1px solid #9db9f0; border-radius: 2px; background: linear-gradient(135deg, #e1eafe, #b6cbfa); }
.vscroll button svg, .hscroll button svg { width: 9px; height: 9px; }
.vscroll .thumb { flex: 1; width: 15px; border: 1px solid #98b0e8; border-radius: 2px; background: linear-gradient(90deg, #cbdafe, #bccffb); display: flex; align-items: center; justify-content: center; }
.vscroll .thumb.short { flex: 0 0 40px; margin-bottom: auto; }
.vscroll .ridge { width: 7px; height: 8px; background: repeating-linear-gradient(#eef4fe 0 1px, #8cb0f8 1px 2px); }
.vscroll.main { width: 17px; padding: 1px 0 1px 1px; }
.viewbar { grid-column: 1 / -1; display: flex; align-items: center; padding-right: 17px; background: #f2f0e4; border-top: 1px solid #e5e2d0; }
.viewbar > button { width: 17px; height: 16px; }
.viewbar > button.on { border: 1px solid #7f9db9; border-top: 0; border-radius: 0 0 3px 3px; background: #fff; }
.viewbar > button svg { width: 9px; height: 9px; }
.viewbar > .sep { width: 7px; }
.hscroll { flex: 1; display: flex; gap: 2px; align-items: center; padding-left: 1px; }
.hscroll .thumb { flex: 1; height: 15px; border: 1px solid #98b0e8; border-radius: 2px; background: linear-gradient(#cbdafe, #b4c9f8); display: flex; align-items: center; justify-content: center; }
.hscroll .ridge { width: 8px; height: 7px; background: repeating-linear-gradient(90deg, #eef4fe 0 1px, #8cb0f8 1px 2px); }

/* floating table window */
.window { position: absolute; left: 2px; right: 171px; top: 7px; border: 1px solid #0019a5; border-top: 0; background: #0841e0; padding: 0 3px 4px; }
.wtitle { height: 22px; display: flex; align-items: center; justify-content: space-between; margin: 0 -3px; padding: 2px 5px 0 3px; background: linear-gradient(#0a4bdc, #3a93ff 10%, #0560ee 25%, #0060f0 75%, #0070ff 90%, #0045d6); color: #fff; }
.wtitle h2 { font-size: 11px; line-height: 14px; }
.wtitle .winbtn { width: 13px; height: 13px; border-radius: 2px; }
.wtitle .winbtn svg { width: 11px; height: 11px; }
.wbody { background: #f0eee2; padding-left: 1px; }
.wbody > .bar { height: 25px; margin: 0 2px; border-radius: 3px; }
.caption { height: 19px; display: flex; align-items: center; justify-content: space-between; padding: 0 5px 0 3px; background: linear-gradient(90deg, #dad8c6, #eeede2); }
.gridwrap { display: flex; height: 385px; border: 2px solid #8f8d80; border-right: 0; border-bottom: 0; padding: 1px 4px 0 1px; background: #f5f4ec; }
.grid { flex: 1; min-width: 0; overflow: hidden; background: #ece9d8; }
table { width: 673px; table-layout: fixed; border-spacing: 0; font: 11px/13px "Liberation Sans", Arial, sans-serif; background: #fff; }
.c0 { width: 15px; }
.c1 { width: 35px; }
.c2 { width: 63px; }
.c3 { width: 70px; }
.c4 { width: 98px; }
.c5 { width: 84px; }
td { height: 14px; padding: 0 3px; border: solid #aca899; border-width: 0 1px 1px 0; text-align: right; white-space: nowrap; overflow: hidden; }
td:nth-child(3), td:nth-child(5) { text-align: left; padding: 0 1px; }
th { height: 14px; padding: 0; background: #ece9d8; border: solid #000; border-width: 0 1px 1px 0; box-shadow: inset 1px 1px #fff; line-height: 13px; overflow: hidden; }
thead th { height: 16px; padding-top: 2px; }
th.focus { border: 1px dotted #000; padding-top: 1px; line-height: 13px; }
.wbody > .records { height: 27px; padding: 0 4px; border-top: 2px solid #fff; }
.records input { width: 58px; height: 18px; margin: 0; border: 0; background: #fff; font: inherit; text-align: right; padding: 0 3px; }
.records span { padding-left: 4px; }
.tabs { height: 22px; margin-top: 1px; padding-left: 1px; display: flex; align-items: flex-start; border-top: 1px solid #fff; }
.tabs button { height: 19px; padding: 0 4px; background: #fff; border: solid #aca899; border-width: 0 1px 1px; border-radius: 0 0 3px 3px; }

/* drawing toolbar */
.letter b, .ink b, .style { font-family: "Liberation Serif", serif; font-size: 15px; font-weight: bold; }
.letter b { width: 16px; font-size: 18px; }
.style { font-size: 14px; }
.tool.color { width: 38px; gap: 6px; }
.ink { width: 18px; height: 18px; display: flex; flex-direction: column; align-items: center; justify-content: space-between; }
.ink i { width: 18px; height: 3px; flex: none; }
.ink svg { width: 16px; height: 14px; }
.black { background: #000; }
.cream { background: #ffffbe; }
.lime { background: #55ff00; }

/* status and task bar */
.status { height: 20px; flex: none; display: flex; justify-content: flex-end; gap: 2px; background: #ece9d8; padding: 2px 0 0; }
.pane { width: 127px; border: 1px solid #f5f3e8; }
.pane.small { width: 18px; }
.pane.coords { width: 231px; padding: 1px 2px; }
.taskbar { height: 7px; flex: none; display: flex; justify-content: space-between; align-items: flex-end; background: linear-gradient(#2a6be0, #3a84f0 50%, #2559d8 60%, #3f8cf0); }
.start { width: 94px; height: 3px; background: #3d9640; }
.tray { width: 55px; height: 3px; background: #12a9ee; }
```
